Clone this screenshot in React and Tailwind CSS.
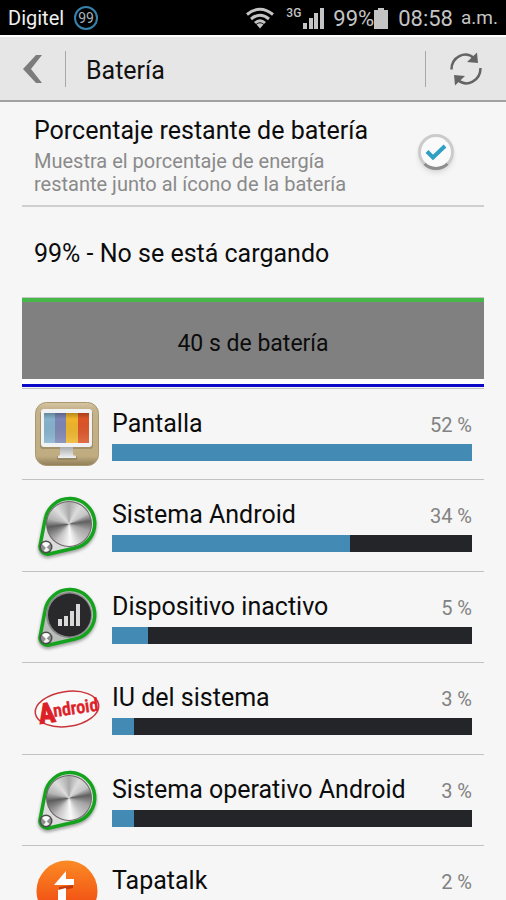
import React from "react";

const apps = [
  { name: "Pantalla", percent: 52, bar: 100, icon: "screen" },
  { name: "Sistema Android", percent: 34, bar: 66, icon: "knob" },
  { name: "Dispositivo inactivo", percent: 5, bar: 10, icon: "signal" },
  { name: "IU del sistema", percent: 3, bar: 6, icon: "android" },
  { name: "Sistema operativo Android", percent: 3, bar: 6, icon: "knob" },
  { name: "Tapatalk", percent: 2, bar: 4, icon: "tapatalk" },
];

function ScreenIcon() {
  return (
    <svg viewBox="0 0 64 64" className="size-16" aria-hidden="true">
      <defs>
        <linearGradient id="tan" x1="0" y1="0" x2="0" y2="1">
          <stop offset="0" stopColor="#d6c7a4" />
          <stop offset="0.1" stopColor="#c5b38c" />
          <stop offset="0.85" stopColor="#c0ac80" />
          <stop offset="1" stopColor="#8f7d58" />
        </linearGradient>
        <linearGradient id="stand" x1="0" y1="0" x2="0" y2="1">
          <stop offset="0" stopColor="#a9abad" />
          <stop offset="1" stopColor="#f0f1f2" />
        </linearGradient>
        <linearGradient id="glass" x1="0" y1="0" x2="0" y2="1">
          <stop offset="0" stopColor="#000" stopOpacity="0.25" />
          <stop offset="0.2" stopColor="#000" stopOpacity="0" />
          <stop offset="1" stopColor="#fff" stopOpacity="0.15" />
        </linearGradient>
      </defs>
      <rect x="0.5" y="0.5" width="63" height="63" rx="11" fill="url(#tan)" stroke="#a8976f" />
      <rect x="5" y="9" width="53" height="38" rx="3" fill="#8d7d5c" opacity="0.6" />
      <rect x="22" y="54" width="20" height="4" rx="1" fill="#8d7d5c" opacity="0.7" />
      <path d="M25 45h13v8l3 1v2H23v-2l2-1z" fill="url(#stand)" />
      <rect x="6" y="7" width="51" height="38" rx="3" fill="#f1f2f3" />
      <rect x="9" y="11" width="11" height="30" fill="#86b3cd" />
      <rect x="20" y="11" width="11" height="30" fill="#7d86b5" />
      <rect x="31" y="11" width="12" height="30" fill="#efb62c" />
      <rect x="43" y="11" width="11" height="30" fill="#dd5527" />
      <rect x="9" y="11" width="45" height="30" fill="url(#glass)" />
    </svg>
  );
}

function KnobIcon({ signal }) {
  return (
    <div className="relative size-16" aria-hidden="true">
      <svg viewBox="0 0 64 64" className="size-16 overflow-visible">
        <defs>
          <filter id="knobShadow" x="-20%" y="-20%" width="140%" height="140%">
            <feGaussianBlur stdDeviation="1.5" />
          </filter>
        </defs>
        <path
          d="M5 52L10 26A25 25 0 1 1 40 54L14 60A7.500 7.500 0 0 1 5 52Z"
          fill="#555"
          stroke="#555"
          strokeWidth="4"
          opacity="0.5"
          transform="translate(0 2)"
          filter="url(#knobShadow)"
        />
        <path
          d="M5 52L10 26A25 25 0 1 1 40 54L14 60A7.500 7.500 0 0 1 5 52Z"
          fill={signal ? "#b9bdb9" : "#dcdcdc"}
          stroke="#14a31c"
          strokeWidth="3.500"
          strokeLinejoin="round"
        />
        <circle cx="34" cy="30" r="23" fill={signal ? "#888" : "#6d6468"} />
        <circle cx="11" cy="53" r="6.500" fill="#4c4c4c" />
        <circle cx="11" cy="53" r="5" fill="#8e8e8e" />
        <path d="M7 50a5 5 0 0 1 8 0l-4 4z" fill="#fafafa" />
        <path d="M8.500 57a5 5 0 0 0 6-1l-3-3z" fill="#f2f2f2" />
        {signal && (
          <>
            <circle cx="34.500" cy="30" r="21.500" fill="#29292b" />
            <path d="M23 41v-7h4v7zM29 41V31h4v10zM35 41V26h4v15zM41 41V19h4v22z" fill="#d9d9d9" />
          </>
        )}
      </svg>
      {!signal && (
        <div className="absolute top-2 left-3 size-11 rounded-full bg-[conic-gradient(#a8a8a8,#dcdcdc_30deg,#c4c4c4_60deg,#606060_82deg,#a5a5a5_110deg,#c4c4c4_140deg,#fafafa_175deg,#c5c5c5_215deg,#8a8a8a_240deg,#5c5c5c_262deg,#b4b4b4_285deg,#dedede_320deg,#a8a8a8)]" />
      )}
    </div>
  );
}

function AndroidIcon() {
  return (
    <svg viewBox="0 0 64 64" className="size-16 overflow-visible" aria-hidden="true">
      <g transform="rotate(-8 32 32)" fill="#dd2027" stroke="#dd2027">
        <ellipse cx="32" cy="32" rx="32" ry="17.500" fill="#fafafa" stroke="#c9353a" strokeWidth="1.500" />
        <text x="3" y="43" fontSize="28" strokeWidth="1" className="font-['Roboto_Condensed','Roboto'] font-bold">A</text>
        <text x="18" y="38" fontSize="18" strokeWidth="0.5" className="font-['Roboto_Condensed','Roboto'] font-medium">ndroid</text>
      </g>
    </svg>
  );
}

function TapatalkIcon() {
  return (
    <svg viewBox="0 0 64 64" className="size-16" aria-hidden="true">
      <defs>
        <linearGradient id="orange" x1="0" y1="0" x2="0" y2="1">
          <stop offset="0" stopColor="#fb8b25" />
          <stop offset="1" stopColor="#ee3a0c" />
        </linearGradient>
      </defs>
      <circle cx="32" cy="31" r="30.500" fill="url(#orange)" />
      <path d="M24 27L38 25v3l-14 3z" fill="#c53a0b" />
      <path d="M19 25L31 11v8h8v6z M23 30l8-2v22h-8z" fill="#fff" />
    </svg>
  );
}

function AppIcon({ kind }) {
  if (kind === "screen") return <ScreenIcon />;
  if (kind === "android") return <AndroidIcon />;
  if (kind === "tapatalk") return <TapatalkIcon />;
  return <KnobIcon signal={kind === "signal"} />;
}

function StatusBar() {
  return (
    <div className="flex h-[35px] shrink-0 items-center bg-black px-2 pt-px text-[#c4c4c4]">
      <span className="text-xl text-[#f0f0f0]">Digitel</span>
      <span className="ml-2.5 flex size-6 items-center justify-center rounded-full border-2 border-[#3583ad] text-sm text-[#a9b4ba]">
        99
      </span>
      <svg viewBox="0 0 28 22" className="ml-auto h-[22px] w-7" fill="none" stroke="#c4c4c4" strokeWidth="3" aria-label="Wi-Fi">
        <path d="M1 7.500Q14 -3 27 7.500" />
        <path d="M5 12Q14 4.500 23 12" />
        <path d="M9 16Q14 11.500 19 16" />
        <path d="M10.500 17.500Q14 15 17.500 17.500L14 21.500Z" fill="#c4c4c4" stroke="none" />
      </svg>
      <span className="ml-3 self-start pt-1 text-xs leading-4 font-medium">3G</span>
      <svg viewBox="0 0 22 21" className="ml-0.5 h-[21px] w-[22px]" fill="#c4c4c4" aria-label="Señal">
        <path d="M0 15h4v6H0zM6 10h4v11H6zM11 5h4v16h-4zM17 0h4v21h-4z" />
      </svg>
      <span className="ml-2 text-[22px]">99%</span>
      <svg viewBox="0 0 14 21" className="h-[21px] w-3.5" fill="#c4c4c4" aria-label="Batería">
        <path d="M4 0h6v2h4v19H0V2h4z" />
      </svg>
      <span className="ml-2.5 text-[22px]">08:58</span>
      <span className="ml-2 text-[19px]">a.m.</span>
    </div>
  );
}

function Header() {
  return (
    <header className="flex h-[67px] shrink-0 items-center border-t-2 border-b-2 border-t-white border-b-[#a2a2a2] bg-[#e6e6e6]">
      <button type="button" aria-label="Atrás" className="flex h-full w-[65px] items-center justify-center">
        <svg viewBox="0 0 20 28" className="h-7 w-5" fill="#7c7c7c">
          <path d="M13 0h6L8 14l11 14h-6L0 14z" />
        </svg>
      </button>
      <div className="h-9 w-px bg-[#a8a8a8]" />
      <h1 className="ml-5 pt-1 text-[25px] text-[#111]">Batería</h1>
      <div className="ml-auto h-9 w-px bg-[#a8a8a8]" />
      <button type="button" aria-label="Actualizar" className="flex h-full w-20 items-center justify-center">
        <svg viewBox="0 0 32 34" className="h-[34px] w-8" fill="none" stroke="#646464" strokeWidth="2.500">
          <path d="M1.500 17.500C1.500 5 15 -2 24 6" />
          <path d="M30.500 16C30.500 28.500 17 36 8 28" />
          <path d="M27 0.500L28 11L17 10z" fill="#646464" stroke="none" />
          <path d="M5 33.500L4 23L15 24z" fill="#646464" stroke="none" />
        </svg>
      </button>
    </header>
  );
}

function AppRow({ app }) {
  return (
    <li className="flex h-[91px] border-b border-[#c2c2c2] pr-3 pl-[13px] even:h-[92px]">
      <div className="flex w-[77px] shrink-0 items-center">
        <AppIcon kind={app.icon} />
      </div>
      <div className="min-w-0 flex-1 pt-[19px]">
        <div className="flex h-9 items-baseline justify-between">
          <span className="text-[25px] leading-8 text-[#0c0c0c]">{app.name}</span>
          <span className="text-xl text-[#828282]">{app.percent} %</span>
        </div>
        <div
          role="progressbar"
          aria-label={app.name}
          aria-valuenow={app.percent}
          className="h-[17px] bg-[#242528]"
        >
          <div className="h-full bg-[#438bb5]" style={{ width: `${app.bar}%` }} />
        </div>
      </div>
    </li>
  );
}

export default function App() {
  return (
    <div className="flex h-screen flex-col overflow-hidden bg-[#f6f6f6] font-['Roboto',sans-serif]">
      <StatusBar />
      <Header />
      <main className="px-[22px]">
        <section className="flex h-[105px] border-b-2 border-[#cfcfcf] pt-[13px] pr-[30px] pl-3">
          <label htmlFor="show-percent" className="flex-1">
            <span className="block text-[25px] leading-8 text-[#0c0c0c]">Porcentaje restante de batería</span>
            <span className="block w-80 pt-[3px] text-xl leading-[23px] text-[#8a8a8a]">
              Muestra el porcentaje de energía restante junto al ícono de la batería
            </span>
          </label>
          <div className="grid h-[74px] place-items-center">
            <input
              id="show-percent"
              type="checkbox"
              defaultChecked
              className="col-start-1 row-start-1 size-9 appearance-none rounded-full border-3 border-[#cbcbcb] border-b-[#8d8d8d] bg-[#fafafa] shadow-md"
            />
            <svg viewBox="0 0 22 18" className="pointer-events-none col-start-1 row-start-1 h-[18px] w-[22px]" aria-hidden="true">
              <path d="M2 8.500L8 14.500L20 3" fill="none" stroke="#2f9fc4" strokeWidth="4" />
            </svg>
          </div>
        </section>
        <p className="flex h-[90px] items-center pt-1 pl-3 text-[25px] text-[#0c0c0c]">99% - No se está cargando</p>
        <section className="border-t border-b border-t-[#c5c5c5] border-b-[#c2c2c2]">
          <div className="flex h-[81px] items-center justify-center border-t-4 border-[#46b849] bg-[#808080] pt-2 text-[23px] text-[#0c0c0c]">
            40 s de batería
          </div>
          <div className="border-t-5 border-b border-white border-b-transparent">
            <div className="h-[3px] bg-[#0a0ac8]" />
          </div>
        </section>
        <ul>
          {apps.map((app) => (
            <AppRow key={app.name} app={app} />
          ))}
        </ul>
      </main>
    </div>
  );
}
